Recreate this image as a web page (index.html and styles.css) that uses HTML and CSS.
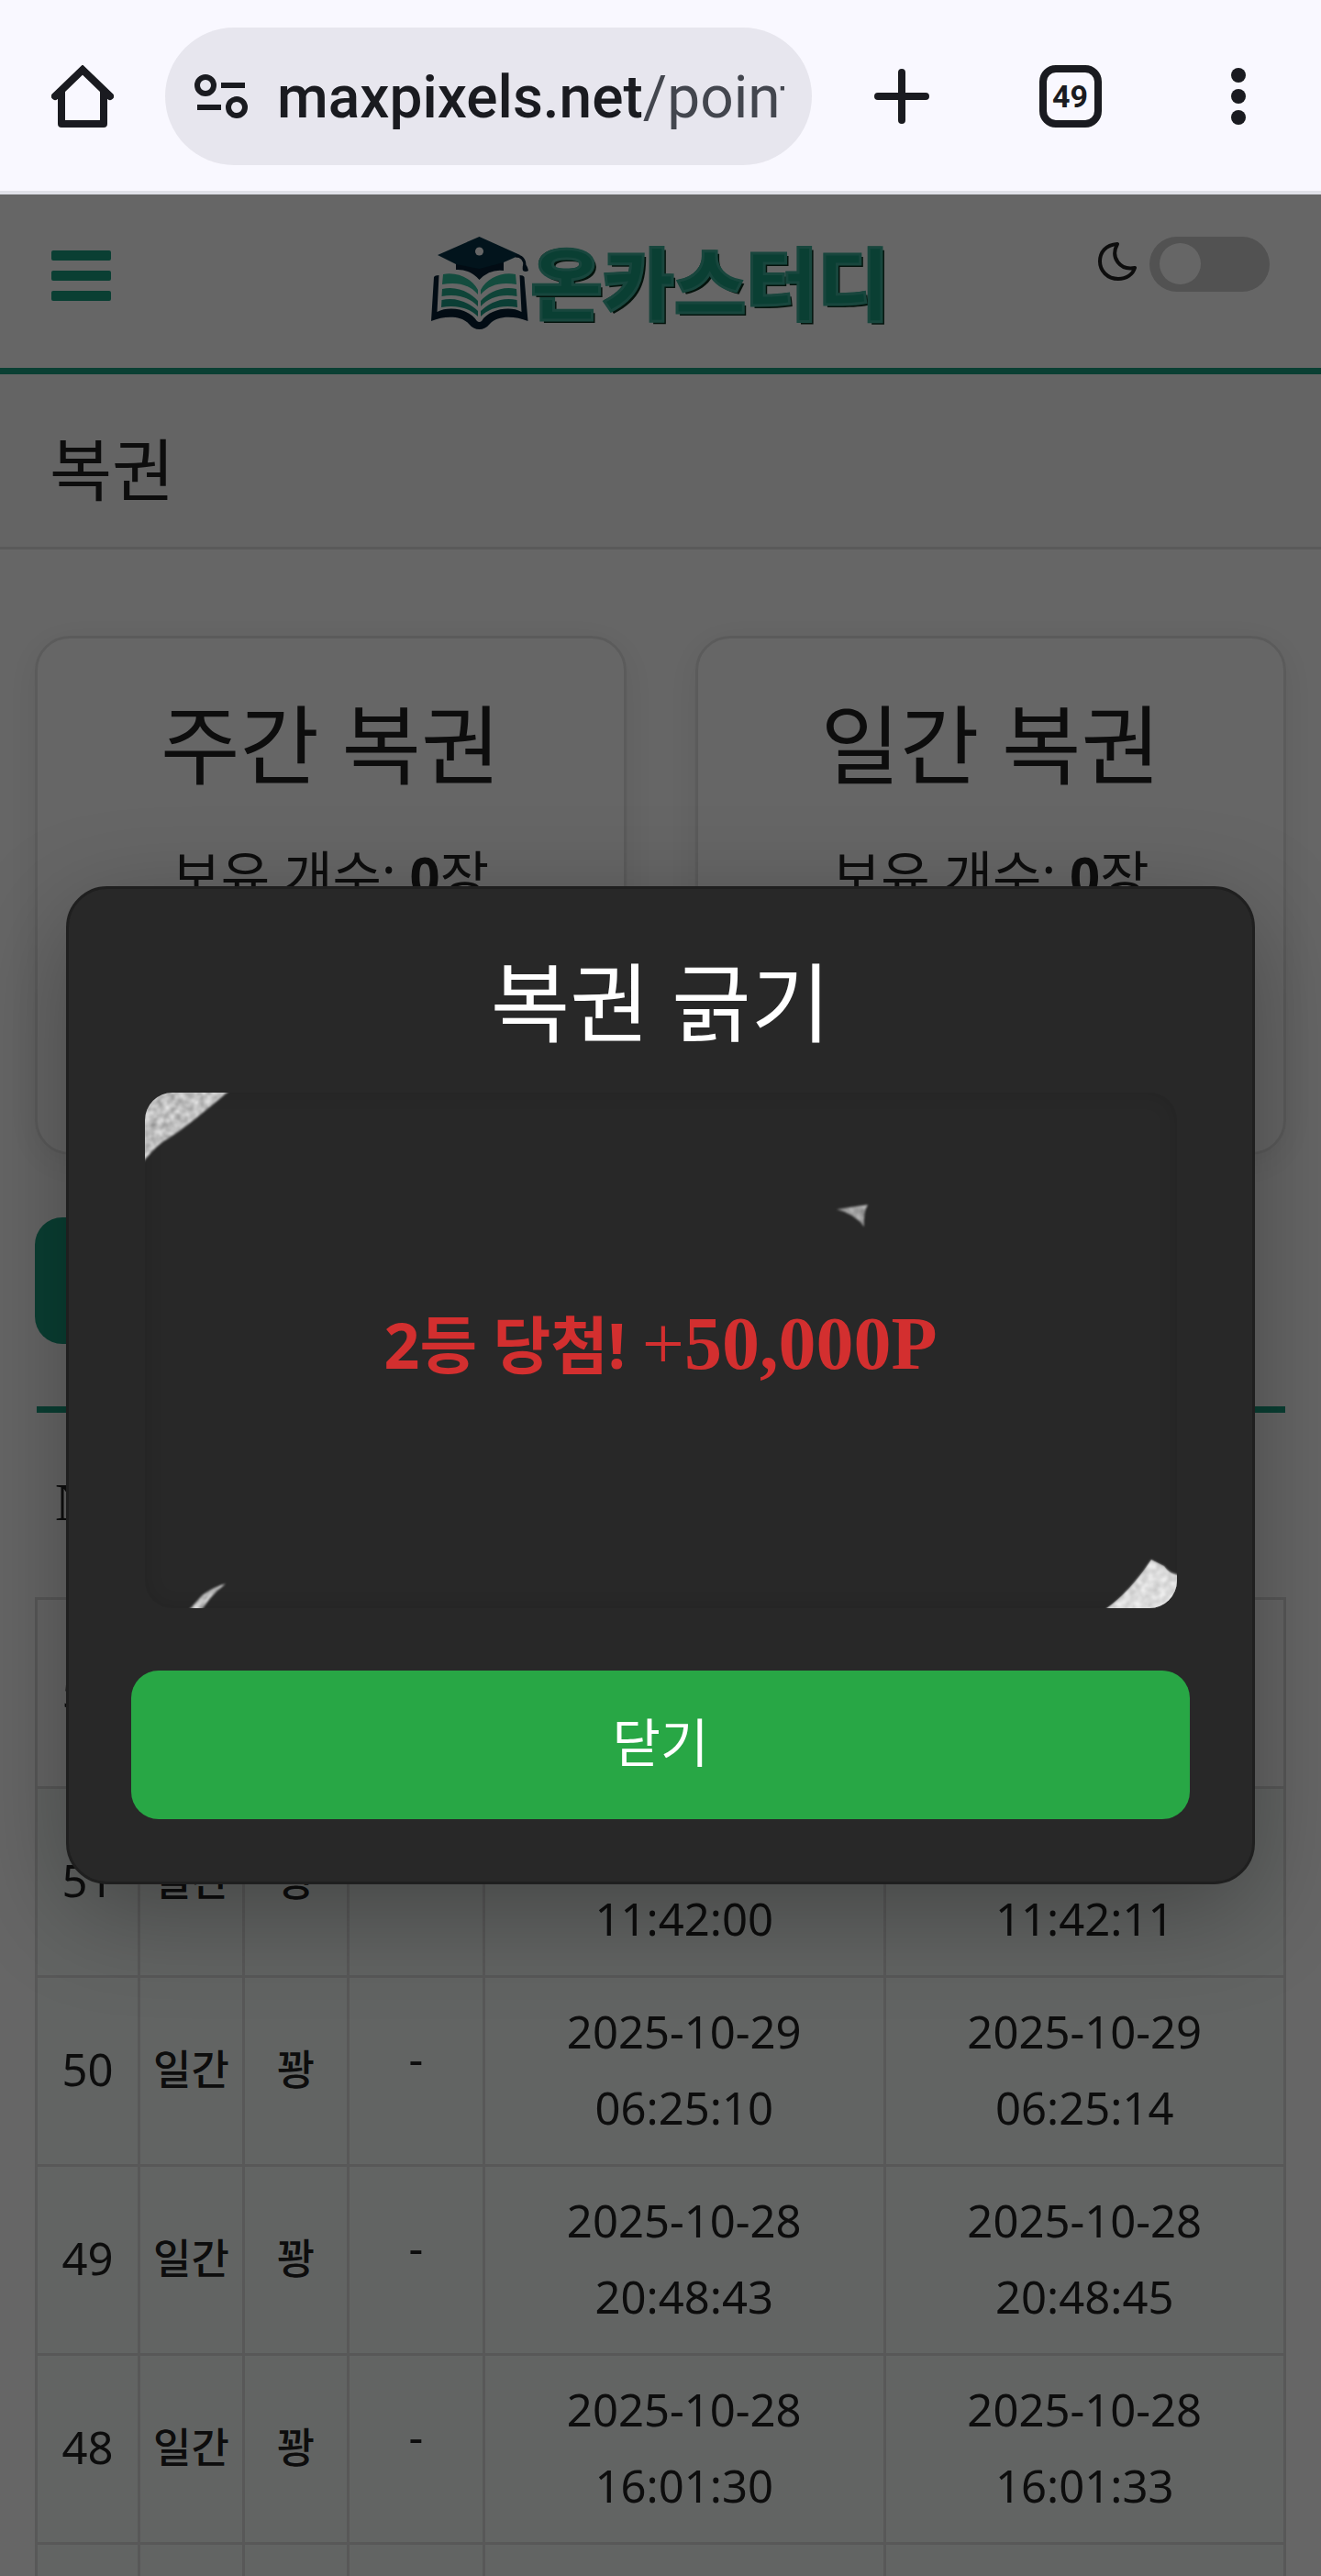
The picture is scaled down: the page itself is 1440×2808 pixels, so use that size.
FILE: index.html
```html
<!DOCTYPE html>
<html lang="ko">
<head>
    <meta charset="UTF-8">
    <meta name="viewport" content="width=device-width, initial-scale=1.0">
    <title>복권 - 온카스터디</title>
    <link rel="stylesheet" href="styles.css">
</head>
<body>
    <!-- Browser bar -->
    <div class="browser-bar">
        <button type="button" class="bar-btn" aria-label="Home">
            <svg width="68" height="68" viewBox="0 0 68 68" fill="none" stroke="#1a1b20" stroke-width="8" stroke-linecap="round" stroke-linejoin="round">
                <path d="M4 34L34 5l30 29" stroke-linejoin="miter"/>
                <path d="M11 29v35h46V29"/>
            </svg>
        </button>
        <a href="#" class="url-box">
            <svg class="tune-icon" width="58" height="48" viewBox="0 0 58 48" fill="none" stroke="#1a1b20" stroke-width="6">
                <circle cx="12" cy="12" r="9"/>
                <path d="M29 12h26M3 36h26"/>
                <circle cx="46" cy="36" r="9"/>
            </svg>
            <span class="url-text"><span class="url-host">maxpixels.net</span>/point</span>
        </a>
        <div class="bar-actions">
            <button type="button" class="bar-btn" aria-label="New tab">
                <svg width="60" height="60" viewBox="0 0 60 60" stroke="#1a1b20" stroke-width="8" stroke-linecap="round"><path d="M30 4v52M4 30h52"/></svg>
            </button>
            <button type="button" class="bar-btn tab-count">49</button>
            <button type="button" class="bar-btn" aria-label="Menu">
                <svg width="16" height="62" viewBox="0 0 16 62" fill="#1a1b20"><circle cx="8" cy="8" r="8"/><circle cx="8" cy="31" r="8"/><circle cx="8" cy="54" r="8"/></svg>
            </button>
        </div>
    </div>

    <div class="page">
        <header class="site-header">
            <button type="button" class="menu-btn" aria-label="메뉴"><span></span><span></span><span></span></button>
            <a href="#" class="logo">
                <svg width="106" height="101" viewBox="0 0 106 101">
                    <path fill="#052034" d="M3 44q1-2 5.500-2L6.500 82C20 75 42 79 50 92q2.500 2 5 0C63 79 86 75 98.500 82L96.500 42q4 0 5 2l4 48C90 86 72 86 64 95q-5 6-11.500 6T41 95C33 86 15 86 0 92z"/>
                    <g id="leaf" fill="#30be9b">
                        <path d="M13 41C28 38 44 45 51 58v5C42 52 28 49 12 52z"/>
                        <path d="M12 57C28 53 43 61 51 70v6C42 66 28 62 11.500 65z" fill="#26ab8c"/>
                        <path d="M11.500 69C28 65 43 73 51 81v6C42 78 28 74 11 77z" fill="#1c9c86"/>
                    </g>
                    <use href="#leaf" transform="translate(105 0) scale(-1 1)"/>
                    <path fill="#052034" d="M27 28v8q15-1 25.500 11Q64 35 79 37v-9z"/>
                    <path fill="#053246" d="M52.500 0L97 20l-18 8-26.500 7L27 30 7 20z"/>
                    <path d="M92 21q10 0 10 11" fill="none" stroke="#052034" stroke-width="3"/>
                    <path fill="#052034" d="M101 29q4 2 5 8-3 2-6 0-1-5 1-8z"/>
                    <circle cx="52.500" cy="16" r="4.500" fill="#fff"/>
                </svg>
                <span class="logo-text">온카스터디</span>
            </a>
            <div class="theme">
                <svg class="moon" width="42" height="42" viewBox="0 0 42 42" fill="none" stroke="#222" stroke-width="4" stroke-linejoin="round">
                    <path d="M21 2C8 3 2 11 2 21s8 19 20 19c9 0 16-5 18-12C24 31 13 17 21 2z"/>
                </svg>
                <input type="checkbox" class="switch" aria-label="다크 모드">
            </div>
        </header>

        <div class="page-title"><h1>복권</h1></div>

        <main class="content">
            <div class="cards">
                <section class="card">
                    <h2>주간 복권</h2>
                    <p>보유 개수: <strong>0</strong>장</p>
                    <button type="button" class="btn">복권 긁기</button>
                </section>
                <section class="card">
                    <h2>일간 복권</h2>
                    <p>보유 개수: <strong>0</strong>장</p>
                    <button type="button" class="btn">복권 긁기</button>
                </section>
            </div>

            <button type="button" class="btn history-btn">복권 내역</button>

            <table class="history">
                <colgroup>
                    <col class="c-no"><col class="c-type"><col class="c-type"><col class="c-point"><col><col>
                </colgroup>
                <thead>
                    <tr><th>No</th><th>종류</th><th>결과</th><th>포인트</th><th>지급일</th><th>사용일</th></tr>
                </thead>
                <tbody>
                    <tr><td>52</td><td class="kr">일간</td><td class="kr">2등</td><td class="point">-</td><td>2025-10-31 11:42:00</td><td>-</td></tr>
                    <tr class="used"><td>51</td><td class="kr">일간</td><td class="kr">꽝</td><td class="point">-</td><td>2025-10-30 11:42:00</td><td>2025-10-30 11:42:11</td></tr>
                    <tr class="used"><td>50</td><td class="kr">일간</td><td class="kr">꽝</td><td class="point">-</td><td>2025-10-29 06:25:10</td><td>2025-10-29 06:25:14</td></tr>
                    <tr class="used"><td>49</td><td class="kr">일간</td><td class="kr">꽝</td><td class="point">-</td><td>2025-10-28 20:48:43</td><td>2025-10-28 20:48:45</td></tr>
                    <tr class="used"><td>48</td><td class="kr">일간</td><td class="kr">꽝</td><td class="point">-</td><td>2025-10-28 16:01:30</td><td>2025-10-28 16:01:33</td></tr>
                    <tr class="used"><td></td><td></td><td></td><td></td><td></td><td></td></tr>
                </tbody>
            </table>
        </main>

        <!-- Scratch modal -->
        <div class="overlay">
            <div class="modal" role="dialog" aria-labelledby="modal-title">
                <h2 id="modal-title">복권 긁기</h2>
                <div class="scratch">
                    <p class="result">2등 당첨! <span class="prize"><span class="plus">+</span>50,000P</span></p>
                    <svg class="coating" viewBox="0 0 1125 562">
                        <filter id="grain" x="0" y="0" width="100%" height="100%" color-interpolation-filters="sRGB">
                            <feTurbulence type="fractalNoise" baseFrequency="0.15" numOctaves="2" result="noise"/>
                            <feColorMatrix in="noise" type="matrix" values="0.5 0 0 0 0.5  0.5 0 0 0 0.5  0.5 0 0 0 0.5  0 0 0 0 1"/>
                            <feComposite in2="SourceGraphic" operator="in"/>
                            <feGaussianBlur stdDeviation="1"/>
                        </filter>
                        <g filter="url(#grain)">
                            <path d="M-4-4H94Q74 13 54 29T20 53Q8 62-4 78z"/>
                            <path d="M754 127l34-5q-5 8-4 24-10-14-30-19z" opacity="0.8"/>
                            <path d="M46 566l16-18q12-9 26-13-9 7-17 16l-11 15z"/>
                            <path d="M1044 566q28-20 53-57l14 7q6 9 20 10v40z"/>
                        </g>
                        <path d="M1048 562q26-18 49-53l14 7q6 9 14 10v36z" fill="#fff" opacity="0.45"/>
                    </svg>
                </div>
                <button type="button" class="close-btn">닫기</button>
            </div>
        </div>
    </div>
</body>
</html>
```

FILE: styles.css
```css
* {
    box-sizing: border-box;
}
body {
    margin: 0;
    height: 100vh;
    display: flex;
    flex-direction: column;
    font-family: 'Noto Sans', 'Noto Sans CJK KR', sans-serif;
    color: #222;
    background: #fff;
}
h1, h2, p {
    margin: 0;
    font-weight: 400;
}
button {
    font-family: inherit;
    border: none;
    cursor: pointer;
}
a {
    text-decoration: none;
}
svg {
    display: block;
    flex: none;
}

/* Browser bar */
.browser-bar {
    display: flex;
    align-items: center;
    padding: 2px 56px 0;
    height: 212px;
    flex: none;
    background: #f9f8ff;
    border-bottom: 4px solid #e0e1e8;
}
.bar-btn {
    display: flex;
    align-items: center;
    justify-content: center;
    width: 68px;
    height: 68px;
    padding: 0;
    background: none;
}
.url-box {
    display: flex;
    align-items: center;
    gap: 32px;
    flex: 0 1 705px;
    min-width: 0;
    height: 150px;
    margin-left: 56px;
    padding: 0 30px 0 32px;
    border-radius: 75px;
    background: #e7e6ee;
    overflow: hidden;
}
.url-text {
    overflow: hidden;
    white-space: nowrap;
    padding-top: 4px;
    font: 400 64px/90px Roboto, sans-serif;
    color: #43464e;
}
.url-host {
    color: #1a1b20;
    font-weight: 500;
}
.bar-actions {
    flex: 1;
    display: flex;
    align-items: center;
    justify-content: space-between;
    margin-left: 64px;
}
.tab-count {
    border: 8px solid #1a1b20;
    border-radius: 18px;
    color: #1a1b20;
    font: 700 34px/48px Roboto, sans-serif;
}

/* Site */
.page {
    position: relative;
    flex: 1;
    min-height: 0;
    overflow: hidden;
}
.site-header {
    display: grid;
    grid-template-columns: 1fr auto 1fr;
    align-items: start;
    padding: 46px 56px 42px;
    border-bottom: 7px solid #1b9d80;
}
.menu-btn {
    display: flex;
    flex-direction: column;
    gap: 11px;
    width: 65px;
    margin-top: 15px;
    padding: 0;
    background: none;
}
.menu-btn span {
    width: 100%;
    height: 11px;
    border-radius: 2px;
    background: #1b9d80;
}
.logo {
    display: flex;
    align-items: center;
    gap: 2px;
    height: 101px;
}
.logo-text {
    padding-bottom: 8px;
    font: 900 85px/92px 'Noto Sans CJK KR', sans-serif;
    color: #1b9d80;
    -webkit-text-stroke: 3px #3cb09a;
    text-shadow: 3px 3px 0 #0b3020, -1px -1px 0 #0b3020;
}
.theme {
    display: flex;
    justify-self: end;
    gap: 14px;
}
.moon {
    margin-top: 6px;
}
.switch {
    appearance: none;
    width: 131px;
    height: 60px;
    margin: 0;
    padding: 7px 11px;
    border-radius: 30px;
    background: #ccc;
}
.switch::before {
    content: "";
    display: block;
    width: 45px;
    height: 45px;
    border-radius: 50%;
    background: #fff;
}
.page-title {
    padding: 48px 54px 28px;
    background: #f9f9f9;
    border-bottom: 3px solid #e0e0e0;
}
.page-title h1 {
    font-size: 74px;
    line-height: 112px;
}
.content {
    padding: 94px 38px 0;
}
.cards {
    display: grid;
    grid-template-columns: 1fr 1fr;
    gap: 75px;
}
.card {
    padding: 56px 38px 82px;
    border: 3px solid #e4e4e4;
    border-radius: 38px;
    text-align: center;
    box-shadow: 0 8px 38px rgba(0,0,0,0.08);
}
.card h2, .modal h2 {
    font-size: 94px;
    line-height: 120px;
}
.card p {
    margin: 40px 0;
    font-size: 58px;
    line-height: 84px;
}
.btn {
    height: 138px;
    padding: 0 60px;
    border-radius: 30px;
    background: #1b9d80;
    color: #fff;
    font-size: 58px;
}
.history-btn {
    margin: 68px 0;
}

/* History table */
.history {
    width: 100%;
    table-layout: fixed;
    border-collapse: collapse;
    border-top: 7px solid #1b9d80;
    text-align: center;
    font-size: 49px;
    line-height: 83px;
}
.c-no {
    width: 112px;
}
.c-type {
    width: 114px;
}
.c-point {
    width: 148px;
}
.history th {
    height: 206px;
    padding: 0 0 6px;
    font: 400 58px/84px 'Liberation Serif', 'Noto Sans CJK KR', serif;
    white-space: nowrap;
}
.history td {
    height: 206px;
    padding: 16px 8px 20px;
    border: 3px solid #dcdcdc;
}
.history .kr {
    padding: 16px 0 20px;
    font-size: 45px;
    font-weight: 500;
}
.history .point {
    padding-bottom: 44px;
}
.used {
    background: #f4faf8;
}

/* Modal */
.overlay {
    position: absolute;
    inset: 0;
    display: flex;
    align-items: center;
    justify-content: center;
    background: rgba(0,0,0,0.6);
}
.modal {
    width: 90%;
    padding: 64px 68px 68px;
    border: 3px solid #1f1f1f;
    border-radius: 45px;
    background: #282828;
    color: #fff;
    text-align: center;
    box-shadow: 0 30px 112px rgba(0,0,0,0.3);
}
.scratch {
    position: relative;
    display: flex;
    align-items: center;
    justify-content: center;
    max-width: 1125px;
    aspect-ratio: 2 / 1;
    margin: 38px auto 68px;
    border-radius: 30px;
    overflow: hidden;
    box-shadow: inset 0 0 20px rgba(0,0,0,0.12);
}
.coating {
    position: absolute;
    inset: 0;
    width: 100%;
    height: 100%;
}
.result {
    padding-bottom: 14px;
    color: #d32f2f;
    font-size: 68px;
    font-weight: 700;
    line-height: 90px;
}
.prize {
    font-family: 'Liberation Serif', serif;
    font-size: 82px;
}
.plus {
    font-weight: 400;
}
.close-btn {
    width: 100%;
    height: 162px;
    padding-bottom: 12px;
    border-radius: 30px;
    background: #28a745;
    color: #fff;
    font-size: 57px;
}
```
